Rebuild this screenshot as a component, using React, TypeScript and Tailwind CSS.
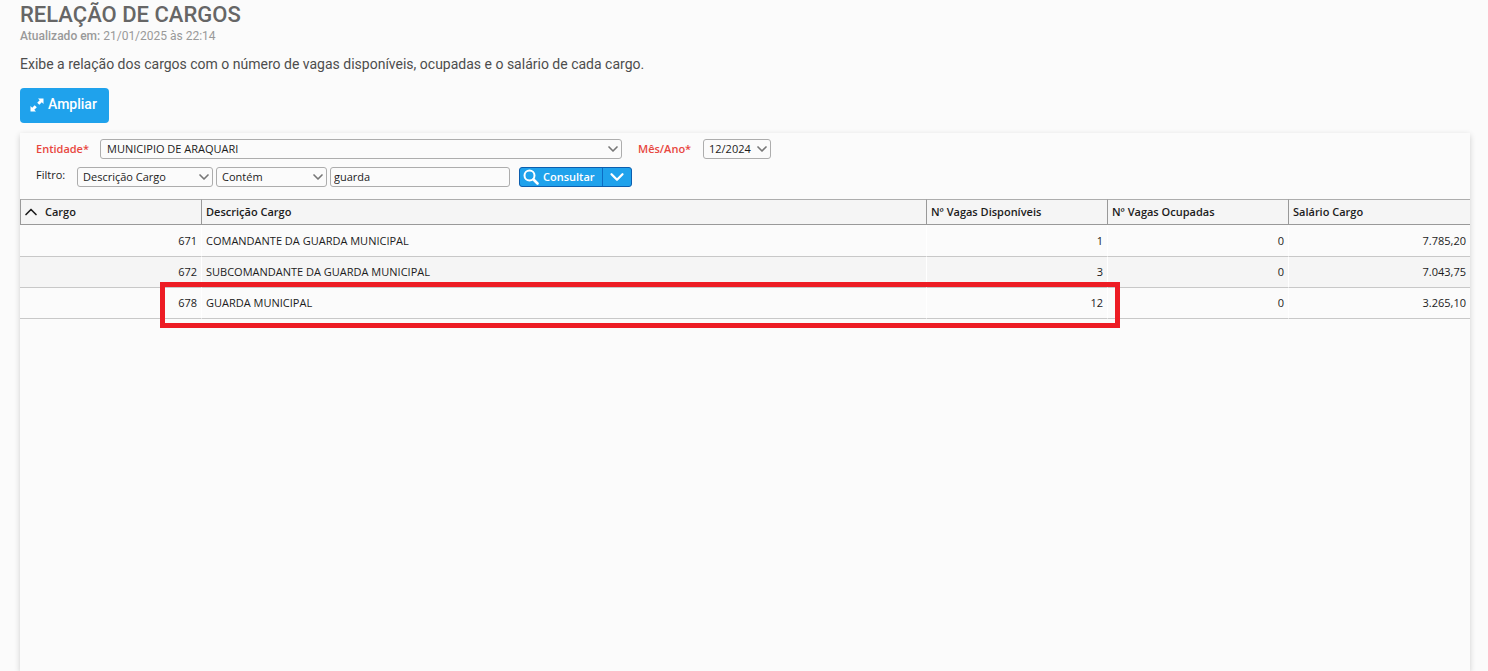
import React, { useState } from "react";
import { ChevronDown, ChevronUp } from "lucide-react";

const cargos = [
  { codigo: "671", descricao: "COMANDANTE DA GUARDA MUNICIPAL", disponiveis: "1", ocupadas: "0", salario: "7.785,20" },
  { codigo: "672", descricao: "SUBCOMANDANTE DA GUARDA MUNICIPAL", disponiveis: "3", ocupadas: "0", salario: "7.043,75" },
  { codigo: "678", descricao: "GUARDA MUNICIPAL", disponiveis: "12", ocupadas: "0", salario: "3.265,10" },
];

type SelectProps = {
  id: string;
  label?: string;
  className: string;
  options: string[];
};

const Select = ({ id, label, className, options }: SelectProps) => {
  return (
    <div className={`relative ${className}`}>
      <select
        id={id}
        aria-label={label}
        className="block h-5 w-full appearance-none rounded-[3px] border border-[#adadad] bg-[#fbfbfb] pr-4 text-[11px] leading-4 text-[#1c1c1c]"
      >
        {options.map((option) => (
          <option key={option}>{option}</option>
        ))}
      </select>
      <ChevronDown
        className="pointer-events-none absolute top-0.5 right-px h-4 w-4 text-[#777]"
        strokeWidth={2.5}
      />
    </div>
  );
};

const ExpandIcon = () => {
  return (
    <svg viewBox="0 0 14 14" className="h-3.5 w-3.5" fill="currentColor" aria-hidden="true">
      <path d="M8 0.5h5.5v5.5l-1.7-1.7-2.5 2.5-2.1-2.1 2.5-2.5z" />
      <path d="M6 13.5H0.5V8l1.7 1.7 2.5-2.5 2.1 2.1-2.5 2.5z" />
    </svg>
  );
};

const SearchIcon = () => {
  return (
    <svg viewBox="0 0 16 16" className="h-4 w-4" fill="none" stroke="currentColor" aria-hidden="true">
      <circle cx="6.5" cy="6.5" r="5" strokeWidth="2" />
      <path d="M10.5 10.5l4 4" strokeWidth="2.6" strokeLinecap="round" />
    </svg>
  );
};

const Header = () => {
  return (
    <header className="px-5 pt-0.5 font-[Roboto,sans-serif]">
      <h1 className="text-[22px] leading-[26px] font-medium text-[#666]">RELAÇÃO DE CARGOS</h1>
      <p className="text-[12px] leading-4 text-[#999]">
        <strong className="font-medium">Atualizado em:</strong> 21/01/2025 às 22:14
      </p>
      <p className="mt-2.5 text-[14px] leading-5 text-[#4d4d4d]">
        Exibe a relação dos cargos com o número de vagas disponíveis, ocupadas e o salário de cada cargo.
      </p>
      <button
        type="button"
        className="mt-3.5 flex h-[35px] items-center gap-1 rounded-[4px] bg-[#1fa2ec] pr-3 pb-0.5 pl-2.5 text-[14px] font-medium text-white"
      >
        <ExpandIcon />
        Ampliar
      </button>
    </header>
  );
};

const Filters = () => {
  const [texto, setTexto] = useState("guarda");

  return (
    <form className="pt-1.5 pr-4 pb-[11px] pl-4 text-[11px]" onSubmit={(e) => e.preventDefault()}>
      <div className="flex items-center">
        <label htmlFor="entidade" className="w-16 font-semibold text-[#e8473f]">
          Entidade*
        </label>
        <Select id="entidade" className="w-[522px] [&>select]:pl-1.5" options={["MUNICIPIO DE ARAQUARI"]} />
        <label htmlFor="mes" className="ml-4 w-[65px] font-semibold text-[#e8473f]">
          Mês/Ano*
        </label>
        <Select id="mes" className="w-[68px] [&>select]:pl-[5px]" options={["12/2024"]} />
      </div>
      <div className="mt-2 flex items-center">
        <label htmlFor="campo" className="w-[41px] pb-1 text-[#222]">
          Filtro:
        </label>
        <Select
          id="campo"
          className="w-[136px] [&>select]:pl-[5px]"
          options={["Descrição Cargo", "Cargo", "Salário Cargo"]}
        />
        <Select
          id="operador"
          label="Operador"
          className="ml-[3px] w-[111px] [&>select]:pl-[5px]"
          options={["Contém", "Igual"]}
        />
        <input
          type="text"
          aria-label="Valor do filtro"
          value={texto}
          onChange={(e) => setTexto(e.target.value)}
          className="ml-[3px] h-5 w-[180px] rounded-[3px] border border-[#adadad] bg-[#fbfbfb] px-[3px] pb-0.5 text-[#1c1c1c]"
        />
        <div className="ml-[9px] flex h-5 w-[113px] overflow-hidden rounded-[3px] border border-[#0c5eae] bg-[#1fa2ec] text-white">
          <button type="submit" className="flex flex-1 items-center gap-1 pl-[3px] font-semibold">
            <SearchIcon />
            Consultar
          </button>
          <button
            type="button"
            aria-label="Mais opções"
            className="flex w-[29px] items-center justify-center border-l border-[#0c6cc4]"
          >
            <ChevronDown className="h-[22px] w-[22px] shrink-0" strokeWidth={2.5} />
          </button>
        </div>
      </div>
    </form>
  );
};

const CargosTable = () => {
  return (
    <div className="relative">
      <table className="w-full table-fixed border-separate border-spacing-0 text-[11px] leading-4 text-[#1c1c1c]">
        <colgroup>
          <col className="w-[182px]" />
          <col />
          <col className="w-[181px]" />
          <col className="w-[181px]" />
          <col className="w-[181px]" />
        </colgroup>
        <thead>
          <tr className="bg-[#f5f5f5] text-left [&>th]:h-[26px] [&>th]:border-y [&>th]:border-r [&>th]:border-t-[#adadad] [&>th]:border-r-[#999] [&>th]:border-b-[#999] [&>th]:p-0 [&>th]:font-semibold [&>th:last-child]:border-r-0 [&>th+th]:pl-1">
            <th className="border-l border-l-[#999]">
              <span className="flex items-center gap-1">
                <ChevronUp className="h-5 w-5" strokeWidth={2} />
                Cargo
              </span>
            </th>
            <th>Descrição Cargo</th>
            <th>Nº Vagas Disponíveis</th>
            <th>Nº Vagas Ocupadas</th>
            <th>Salário Cargo</th>
          </tr>
        </thead>
        <tbody>
          {cargos.map((cargo) => (
            <tr
              key={cargo.codigo}
              className="text-right even:bg-[#f5f5f5] [&>td]:h-[31px] [&>td]:border-r [&>td]:border-b [&>td]:border-r-white [&>td]:border-b-[#c8c8c8] [&>td]:px-1 [&>td]:py-0 first:[&>td]:h-8 first:[&>td]:pt-px [&>td:last-child]:border-r-0"
            >
              <td>{cargo.codigo}</td>
              <td className="text-left">{cargo.descricao}</td>
              <td>{cargo.disponiveis}</td>
              <td>{cargo.ocupadas}</td>
              <td>{cargo.salario}</td>
            </tr>
          ))}
        </tbody>
      </table>
      {/* highlight around the last row */}
      <div className="pointer-events-none absolute top-[83px] right-[350px] left-[140px] h-[46px] border-5 border-[#ed1c24]" />
    </div>
  );
};

const App = () => {
  return (
    <div className="flex h-screen flex-col overflow-hidden bg-[#fbfbfb]">
      <Header />
      <main className="mt-2.5 mr-[18px] ml-5 flex-1 bg-[#fbfbfb] font-['Open_Sans',sans-serif] shadow-[0_2px_6px_rgba(0,0,0,0.18)]">
        <Filters />
        <CargosTable />
      </main>
    </div>
  );
};

export default App;
